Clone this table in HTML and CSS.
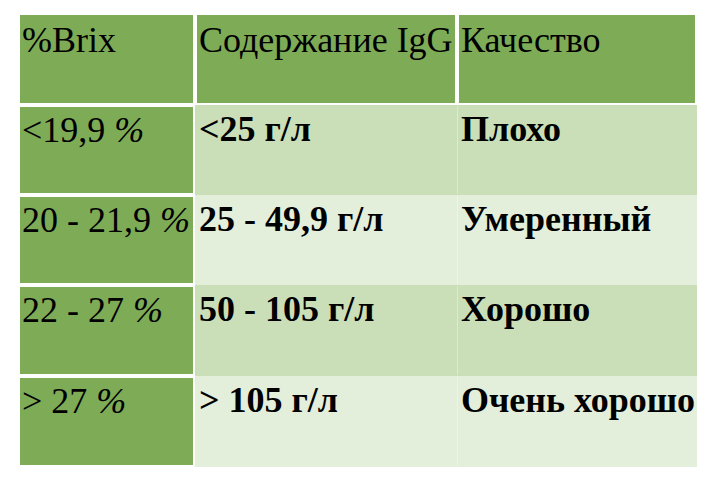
FILE: index.html
```html
<!DOCTYPE html>
<html lang="ru">
<head>
<meta charset="utf-8">
<link rel="stylesheet" href="styles.css">
</head>
<body>
<div class="table">
  <div class="cell head">%Brix</div>
  <div class="cell head">Содержание IgG</div>
  <div class="cell head">Качество</div>

  <div class="cell first">&lt;19,9 <span class="pct">%</span></div>
  <div class="cell val odd">&lt;25 г/л</div>
  <div class="cell val odd last">Плохо</div>

  <div class="cell first">20 - 21,9 <span class="pct">%</span></div>
  <div class="cell val even">25 - 49,9 г/л</div>
  <div class="cell val even last">Умеренный</div>

  <div class="cell first">22 - 27 <span class="pct">%</span></div>
  <div class="cell val odd">50 - 105 г/л</div>
  <div class="cell val odd last">Хорошо</div>

  <div class="cell first">&gt; 27 <span class="pct">%</span></div>
  <div class="cell val even">&gt; 105 г/л</div>
  <div class="cell val even last">Очень хорошо</div>
</div>
</body>
</html>
```

FILE: styles.css
```css
html, body {
  margin: 0;
  padding: 0;
  background: #ffffff;
  overflow: hidden;
}
body {
  width: 716px;
  height: 478px;
  padding: 13px 0 0 18px;
  box-sizing: border-box;
  font-family: "Liberation Serif", "Times New Roman", serif;
  color: #000;
}
.table {
  display: grid;
  grid-template-columns: 177px 262px 240px;
  grid-template-rows: 92px 90px 90px 91px 91px;
}
.cell {
  font-family: "Liberation Serif", "Times New Roman", Tinos, serif;
  font-size: 36px;
  line-height: normal;
  white-space: nowrap;
  border: 2px solid transparent;
  padding: 1px 2px 0 2px;
  box-sizing: border-box;
  color: #000000;
}
.head {
  background: #7eab56;
  border-color: #ffffff;
  padding-top: 4px;
}
.first {
  background: #7eab56;
  border-color: #ffffff;
  padding-top: 2px;
}
.val {
  font-weight: bold;
}
.odd {
  background: #cadfb8;
}
.even {
  background: #e3eedb;
}
.last {
  border-left: 1px solid rgba(255, 255, 255, 0.35);
  padding-left: 3px;
}
.pct {
  font-style: italic;
}
```
